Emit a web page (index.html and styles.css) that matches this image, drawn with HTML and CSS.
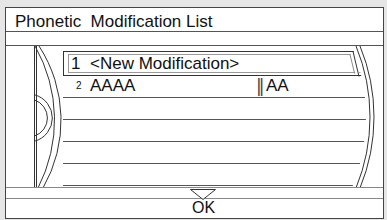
FILE: index.html
```html
<!DOCTYPE html>
<html lang="en">
<head>
<meta charset="UTF-8">
<meta name="viewport" content="width=device-width, initial-scale=1.0">
<link rel="stylesheet" href="styles.css">
</head>
<body>

<div class="panel">
    <div class="title">Phonetic&nbsp; Modification List</div>
    <div class="band"></div>

    <div class="list">
        <div class="selected">
            <div class="selected-inner">
                <span class="num">1</span><span class="name">&lt;New Modification&gt;</span>
            </div>
        </div>
        <div class="row">
            <span class="num small">2</span><span class="name">AAAA</span><span class="sep">‖</span><span class="phon">AA</span>
        </div>
        <div class="row"></div>
        <div class="row"></div>
        <div class="row"></div>
        <div class="row"></div>

        <!-- barrel decoration drawn over the list -->
        <svg class="deco" width="377" height="142" viewBox="0 0 377 142">
            <path d="M346,0 A187,187 0 0 1 346,142 L377,142 L377,0 Z" fill="#fff"/>
            <polygon points="344.6,7.5 348.6,7.5 353.4,27.5 349.4,27.5" fill="#fff"/>
            <g fill="none" stroke="#333" stroke-width="1">
                <line x1="28.5" y1="0" x2="28.5" y2="142"/>
                <line x1="30.5" y1="0" x2="30.5" y2="142"/>
                <path d="M29,0 A149,149 0 0 1 32,142"/>
                <path d="M33,0 A136,136 0 0 1 37,142"/>
                <path d="M28.5,48.8 A24,24 0 0 1 28.5,95.2"/>
                <path d="M28.5,54 A19,19 0 0 1 28.5,90"/>
                <path d="M350,0 A187,187 0 0 1 350,142"/>
                <path d="M354,0 A187,187 0 0 1 354,142"/>
                <line x1="347" y1="5.5" x2="353" y2="30.5"/>
                <line x1="344" y1="8.5" x2="348.6" y2="27.5" stroke="#888"/>
            </g>
        </svg>
    </div>

    <div class="arrow-band">
        <svg class="arrow" width="26" height="12" viewBox="0 0 26 12">
            <polygon points="0.5,1.5 25.5,1.5 13,11.5" fill="#fff" stroke="#333"/>
        </svg>
    </div>
    <div class="ok">OK</div>
</div>

</body>
</html>
```

FILE: styles.css
```css
body {
    margin: 0;
    background-color: #e6e6e6;
    font-family: "Liberation Sans", Arial, sans-serif;
    color: #111;
}
.panel {
    margin: 7px 0 0 5px;
    width: 379px;
    height: 212px;
    box-sizing: border-box;
    border: 1px solid #444;
    background-color: #fff;
}
.title {
    height: 24px;
    box-sizing: border-box;
    padding: 3px 0 0 9px;
    font-size: 17px;
    line-height: 21px;
    border-bottom: 1px solid #555;
}
.band {
    height: 13px;
    border-bottom: 1px solid #555;
}
.list {
    position: relative;
    height: 142px;
    padding: 5px 0 0 57px;
    box-sizing: border-box;
    border-bottom: 1px solid #888;
    overflow: hidden;
}
.deco {
    position: absolute;
    left: 0;
    top: 0;
}
.selected {
    border: 1px solid #333;
    border-right: none;
    padding: 2px 0 2px 4px;
}
.selected-inner {
    display: flex;
    height: 17px;
    padding-left: 2px;
    border: 1px solid #999;
    border-right: none;
    font-size: 17px;
    line-height: 17px;
}
.row {
    display: flex;
    height: 21px;
    padding-left: 8px;
    border-bottom: 1px solid #555;
    font-size: 17px;
    line-height: 20px;
}
.num {
    width: 19px;
    flex: none;
}
.num.small {
    box-sizing: border-box;
    padding-left: 5px;
    font-size: 10px;
}
.name {
    width: 166px;
    flex: none;
}
.sep {
    width: 10px;
    flex: none;
    font-family: "DejaVu Sans", sans-serif;
    color: #444;
}
.arrow-band {
    height: 10px;
    padding-left: 184px;
    border-bottom: 1px solid #888;
}
.arrow {
    display: block;
    overflow: visible;
}
.ok {
    padding-left: 186px;
    font-size: 16px;
    line-height: 17px;
}
```
